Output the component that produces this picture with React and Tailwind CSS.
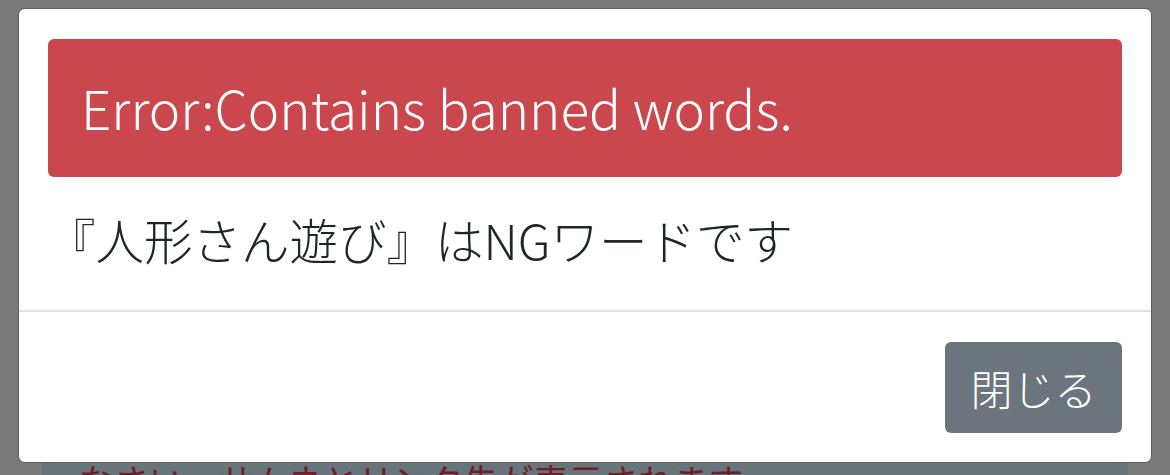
import React from "react";

const font = { fontFamily: '"Noto Sans CJK JP", "Noto Sans", sans-serif' };

export default function App() {
  return (
    <div className="relative w-[1170px] h-[475px] overflow-hidden bg-[#7a7a7a]" style={font}>
      {/* page behind the overlay */}
      <div className="ml-[42px] mr-[42px] mt-[448px] h-[60px] bg-[#67747a] pl-[37px] text-[35px] leading-[64px] text-[#6e1f26] whitespace-nowrap">
        なさい。サムネとリンク先が表示されます。
      </div>

      {/* modal */}
      <div className="absolute left-[18px] top-[8px] w-[1134px] h-[455px] bg-white rounded-[7px] border border-[#5e5e5e] flex flex-col">
        <div className="px-[29px] pt-[30px]">
          <div className="h-[138px] rounded-[6px] bg-[#c9474d] text-white flex items-center px-[33px] text-[53px] font-light">
            Error:Contains banned words.
          </div>
          <p className="mt-[20px] text-[48.5px] leading-[84px] text-[#212529] -ml-[1px] font-light">
            『人形さん遊び』はNGワードです
          </p>
        </div>
        <div className="mt-[29px] border-t-2 border-[#dee2e6] flex-1 flex justify-end items-start px-[29px] pt-[30px]">
          <button className="w-[177px] h-[91px] rounded-[6px] bg-[#6c757d] text-white text-[42px] font-light">
            閉じる
          </button>
        </div>
      </div>
    </div>
  );
}
